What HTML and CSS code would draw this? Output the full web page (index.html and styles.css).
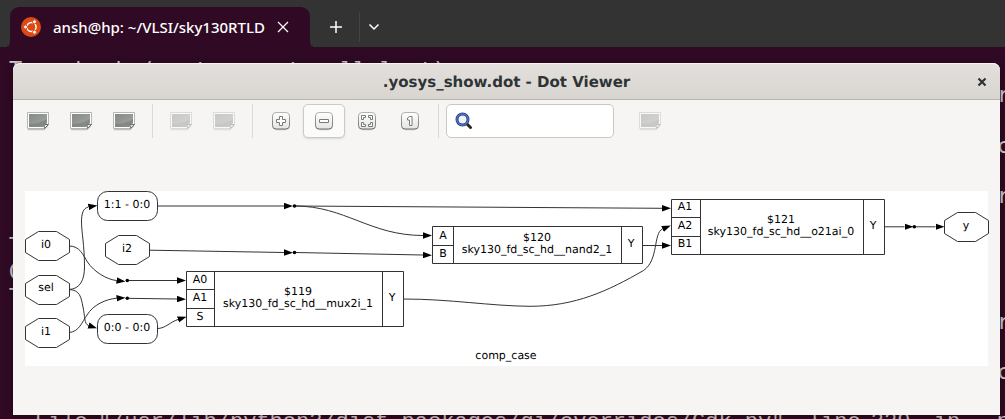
FILE: index.html
```html
<!DOCTYPE html>
<html lang="en">
<head>
<meta charset="utf-8">
<title>.yosys_show.dot - Dot Viewer</title>
<link rel="stylesheet" href="styles.css">
</head>
<body>
<svg class="defs" aria-hidden="true">
  <defs>
    <linearGradient id="photo" x1="0" y1="0" x2="1" y2="1"><stop offset="0" stop-color="#858a85"/><stop offset="1" stop-color="#a5a8a4"/></linearGradient>
    <linearGradient id="key" x1="0" y1="0" x2="0" y2="1"><stop offset="0" stop-color="#ffffff"/><stop offset="1" stop-color="#e4e4e2"/></linearGradient>
    <linearGradient id="keyline" x1="0" y1="0" x2="0" y2="1"><stop offset="0" stop-color="#b4b4b2"/><stop offset="1" stop-color="#6c6e6b"/></linearGradient>
    <symbol id="image" viewBox="0 0 24 20">
      <path d="M2 18.500h16l4-4" fill="none" stroke="#000" stroke-opacity=".22" stroke-width="1.500"/>
      <path d="M1.500 1.500h21v12l-4 4h-17z" fill="#fff" stroke="#b5b7b4"/>
      <path d="M3 3h18v9l-4 4h-14z" fill="url(#photo)"/>
      <path d="M3 13c7 0 13-2 18-5v4l-4 4h-14z" fill="#777c77" opacity=".6"/>
      <path d="M18.500 17.500l-.5-4h4.500z" fill="#e8e8e6" stroke="#6f726f"/>
    </symbol>
    <symbol id="keycap" viewBox="0 0 20 20">
      <rect x="2" y="3" width="16" height="16" rx="4" fill="#000" opacity=".22"/>
      <rect x="1.500" y="1.500" width="17" height="16.500" rx="3.500" fill="url(#key)" stroke="url(#keyline)"/>
    </symbol>
    <symbol id="oct" viewBox="0 0 46 31" overflow="visible">
      <path d="M1 9l13-8h18l13 8v13l-13 8h-18l-13-8z"/>
    </symbol>
    <marker id="arrow" viewBox="0 0 9 7" refX="0" refY="3.500" markerWidth="9" markerHeight="7" markerUnits="userSpaceOnUse" orient="auto">
      <path d="M0 0.300L9 3.500L0 6.700z"/>
    </marker>
  </defs>
</svg>

<header class="tabbar">
  <div class="tab">
    <svg class="ubuntu" viewBox="0 0 20 20" aria-hidden="true">
      <circle cx="10" cy="10" r="10" fill="#dd4814"/>
      <circle cx="10.500" cy="10" r="4.600" fill="none" stroke="#fff" stroke-width="1.500"/>
      <g stroke="#dd4814" stroke-width="1"><circle cx="4.500" cy="10" r="2" fill="#fff"/><circle cx="13.500" cy="4.800" r="2" fill="#fff"/><circle cx="13.500" cy="15.200" r="2" fill="#fff"/></g>
    </svg>
    <span class="tab-title">ansh@hp: ~/VLSI/sky130RTLD</span>
    <button class="flat" aria-label="Close tab"><svg width="12" height="12" viewBox="0 0 12 12"><path d="M1 1l10 10M11 1L1 11"/></svg></button>
  </div>
  <button class="flat newtab" aria-label="New tab"><svg width="14" height="14" viewBox="0 0 14 14"><path d="M7 1v12M1 7h12" stroke-width="1.500"/></svg></button>
  <button class="flat menu" aria-label="Tab menu"><svg width="12" height="8" viewBox="0 0 12 8"><path d="M1.500 1.500l4.500 4.500l4.500-4.500" stroke-width="1.500"/></svg></button>
</header>

<main class="terminal">
  <div class="lines">
    <div class="line"><span>Traceback (most recent call last):</span></div>
    <div class="line"><span></span><span class="edge">r</span></div>
    <div class="line"></div>
    <div class="line"><span></span><span class="edge">c</span></div>
    <div class="line"></div>
    <div class="line"><span></span><span class="edge">r</span></div>
    <div class="line"></div>
    <div class="line"><span>T</span></div>
    <div class="line"><span>G</span></div>
    <div class="line"><span>T</span></div>
    <div class="line"><span></span><span class="edge">r</span></div>
    <div class="line"></div>
    <div class="line"><span></span><span class="edge">c</span></div>
    <div class="line"></div>
    <div class="line trace"><span>File</span><span>"/usr/lib/python3/dist-packages/gi/overrides/Gdk.py",</span><span>line</span><span>329,</span><span>in</span><span class="edge">__n</span></div>
  </div>
</main>

<section class="window" aria-label="Dot Viewer">
  <div class="titlebar">
    <h1 class="title">.yosys_show.dot - Dot Viewer</h1>
    <button class="close" aria-label="Close"><svg width="10" height="10" viewBox="0 0 10 10"><path d="M1.500 1.500l7 7M8.500 1.500l-7 7"/></svg></button>
  </div>
  <div class="toolbar">
    <button class="tool" aria-label="Open"><svg class="pic"><use href="#image"/></svg></button>
    <button class="tool" aria-label="Reload"><svg class="pic"><use href="#image"/></svg></button>
    <button class="tool" aria-label="Print"><svg class="pic"><use href="#image"/></svg></button>
    <span class="sep"></span>
    <button class="tool" aria-label="Back" disabled><svg class="pic"><use href="#image"/></svg></button>
    <button class="tool" aria-label="Forward" disabled><svg class="pic"><use href="#image"/></svg></button>
    <span class="sep"></span>
    <button class="tool" aria-label="Zoom in"><svg class="key" viewBox="0 0 20 20"><use href="#keycap"/><path d="M8.500 5.500h3v3h3v3h-3v3h-3v-3h-3v-3h3z"/></svg></button>
    <button class="tool active" aria-label="Zoom out"><svg class="key" viewBox="0 0 20 20"><use href="#keycap"/><path d="M5.500 8.500h9v3h-9z"/></svg></button>
    <button class="tool" aria-label="Zoom to fit"><svg class="key" viewBox="0 0 20 20"><use href="#keycap"/><path d="M4.500 4.500h4v2h-2v2h-2zM15.500 4.500h-4v2h2v2h2zM4.500 15.500h4v-2h-2v-2h-2zM15.500 15.500h-4v-2h2v-2h2z"/></svg></button>
    <button class="tool" aria-label="Zoom to 100%"><svg class="key" viewBox="0 0 20 20"><use href="#keycap"/><path d="M9.500 5.500h2.500v9h-2.500v-5.500h-2v-2z"/></svg></button>
    <span class="sep"></span>
    <label class="search">
      <svg width="18" height="18" viewBox="0 0 18 18" aria-hidden="true">
        <path d="M11.500 11.500l4 4" stroke="#2c2424" stroke-width="3" stroke-linecap="round"/>
        <circle cx="7.500" cy="7.500" r="5.500" fill="#eef3fa" stroke="#27408f" stroke-width="3"/>
        <circle cx="7.500" cy="7.500" r="5.600" fill="none" stroke="#7089cc" stroke-width="1"/>
      </svg>
      <input type="text" aria-label="Find">
    </label>
    <button class="tool find" aria-label="Find next" disabled><svg class="pic"><use href="#image"/></svg></button>
  </div>
  <div class="canvas">
    <svg class="graph" viewBox="25 191 963 175" role="img" aria-label="comp_case">
      <g class="shape">
        <use href="#oct" x="24.500" y="230.500" width="46" height="31"/>
        <use href="#oct" x="24.500" y="274.500" width="46" height="31"/>
        <use href="#oct" x="24.500" y="317.500" width="46" height="31"/>
        <use href="#oct" x="104.500" y="234.500" width="46" height="31"/>
        <use href="#oct" x="943.500" y="211.500" width="46" height="31"/>
        <rect x="97.500" y="191.500" width="60" height="29" rx="10"/>
        <rect x="97.500" y="314.500" width="60" height="29" rx="10"/>
        <path d="M186.500 271.500h217v55h-217zM214.500 271.500v55M382.500 271.500v55M186.500 289.500h28M186.500 308.500h28"/>
        <path d="M432.500 226.500h210v37h-210zM453.500 226.500v37M621.500 226.500v37M432.500 245.500h21"/>
        <path d="M671.500 199.500h213v55h-213zM700.500 199.500v55M863.500 199.500v55M671.500 217.500h29M671.500 236.500h29"/>
      </g>
      <g class="edges">
        <path d="M158 206H284"/>
        <path d="M295 206L662 208.300"/>
        <path d="M295 206C345 206 370 235.500 423 235.500"/>
        <path d="M150 250.200L284 252.500"/>
        <path d="M295 252.500L423 255"/>
        <path d="M69 246C80 246 83 255 87.500 262C94 272 107 279.500 116.500 280.500"/>
        <path d="M127 280.500H177"/>
        <path d="M69 289.500C80 289 84.500 280 84.500 267C84.500 245 81.500 232 81.500 222C81.500 214 83 208 88.500 207"/>
        <path d="M69 289.500C80 290 81 297 83 307C85 316 84 324 88.500 325.500"/>
        <path d="M69 332.500C79 332 82 322 87 315C93 305 106 299 116.500 298.300"/>
        <path d="M127 298.300L177 299"/>
        <path d="M158 328.500C166 328 170 322 178 319.500"/>
        <path d="M403.500 299C450 299 490 306 530 306.300C575 306.300 608 291 643.500 270.500C659 260 653 233 662.500 229"/>
        <path d="M642.500 245.500H662"/>
        <path d="M884.500 226.800H904.500"/>
        <path d="M914 226.800H935.500"/>
      </g>
      <g class="dots">
        <circle cx="294.500" cy="206" r="1.800"/><circle cx="294.500" cy="252.500" r="1.800"/><circle cx="127.300" cy="280.500" r="1.800"/><circle cx="127.300" cy="298.300" r="1.800"/><circle cx="914.300" cy="226.800" r="1.800"/>
      </g>
      <g class="labels">
        <text x="46" y="248">i0</text><text x="46" y="291">sel</text><text x="46" y="335">i1</text>
        <text x="127" y="252">i2</text><text x="127" y="208">1:1 - 0:0</text><text x="127" y="331">0:0 - 0:0</text>
        <text x="200" y="283">A0</text><text x="200" y="301">A1</text><text x="200" y="320">S</text>
        <text x="298" y="295">$119</text><text x="298" y="307">sky130_fd_sc_hd__mux2i_1</text><text x="392" y="301">Y</text>
        <text x="443" y="239">A</text><text x="443" y="257">B</text>
        <text x="537" y="241">$120</text><text x="537" y="253">sky130_fd_sc_hd__nand2_1</text><text x="631" y="247">Y</text>
        <text x="685" y="210">A1</text><text x="685" y="229">A2</text><text x="685" y="247">B1</text>
        <text x="781" y="223">$121</text><text x="781" y="235">sky130_fd_sc_hd__o21ai_0</text><text x="873" y="229">Y</text>
        <text x="966" y="229">y</text><text x="506" y="359">comp_case</text>
      </g>
    </svg>
  </div>
</section>
</body>
</html>
```

FILE: styles.css
```css
* { box-sizing: border-box; }

body {
  margin: 0;
  height: 100vh;
  overflow: hidden;
  position: relative;
  display: flex;
  flex-direction: column;
  background: #300a24;
  font-family: "DejaVu Sans", sans-serif;
}

button {
  margin: 0;
  padding: 0;
  border: 0;
  background: none;
  display: flex;
  align-items: center;
  justify-content: center;
}

.defs { position: absolute; width: 0; height: 0; }

/* Terminal tab strip */
.tabbar {
  flex: none;
  height: 47px;
  padding: 7px 10px 0;
  display: flex;
  background: #333333;
}

.tab {
  position: relative;
  width: 300px;
  padding: 0 21px 0 11px;
  display: flex;
  align-items: center;
  background: #300a24;
  border-radius: 9px 9px 0 0;
}

.tab::before,
.tab::after {
  content: "";
  position: absolute;
  bottom: 0;
  width: 5px;
  height: 5px;
}

.tab::before { right: 100%; background: radial-gradient(circle at 0 0, #333333 5px, #300a24 5px); }
.tab::after { left: 100%; background: radial-gradient(circle at 100% 0, #333333 5px, #300a24 5px); }

.ubuntu { flex: none; width: 20px; height: 20px; }

.tab-title {
  flex: 1;
  margin: 0 12px;
  white-space: nowrap;
  color: #ffffff;
  font: 500 15px/20px "Noto Sans", sans-serif;
}

.flat svg { fill: none; stroke: #ffffff; stroke-width: 1.2; }
.newtab { width: 46px; margin-left: 3px; }
.menu { width: 28px; height: 30px; margin-top: 5px; border-left: 1px solid #444444; }

/* Terminal output */
.terminal {
  flex: 1;
  min-height: 0;
  padding: 10px 0 0 9px;
}

.lines {
  height: calc(100% + 16px);
  display: flex;
  flex-direction: column;
  justify-content: space-between;
  color: #d8cfd5;
  font: 22px/25px "DejaVu Sans Mono", monospace;
}

.line {
  flex: none;
  height: 25px;
  display: flex;
  justify-content: space-between;
  white-space: pre;
}

.edge { margin-right: -5px; }
.trace { padding-left: 26px; font-family: "Liberation Mono", monospace; }

/* Viewer window, floating over the terminal */
.window {
  position: absolute;
  top: 63px;
  right: 5px;
  bottom: 4px;
  left: 13px;
  display: flex;
  flex-direction: column;
  background: #f6f5f3;
  border-radius: 7px 7px 0 0;
  box-shadow: 0 1px 6px 1px rgba(0, 0, 0, 0.35);
}

.titlebar {
  flex: none;
  height: 37px;
  padding: 0 10px;
  display: grid;
  grid-template-columns: 16px 1fr 16px;
  align-items: center;
  background: linear-gradient(#e2dfdc, #d9d6d1);
  border-top: 1px solid #f6f5f4;
  border-bottom: 1px solid #b9b5ad;
  border-radius: 7px 7px 0 0;
}

.title {
  grid-column: 2;
  margin: 0;
  color: #2e3436;
  font-size: 15px;
  font-weight: 700;
  line-height: 20px;
  text-align: center;
  text-rendering: geometricPrecision;
}

.close svg { fill: none; stroke: #2e3436; stroke-width: 2.2; }

.toolbar {
  flex: none;
  height: 42px;
  padding: 4px;
  display: flex;
  gap: 1px;
}

.tool {
  width: 42px;
  height: 34px;
  border: 1px solid transparent;
  border-radius: 5px;
}

.tool.active {
  background: #fbfbfa;
  border-color: #cdc9c5;
  box-shadow: 0 1px 2px rgba(0, 0, 0, 0.12);
}

.tool:disabled { opacity: 0.4; }
.pic { width: 24px; height: 20px; }
.key { width: 20px; height: 20px; fill: #ffffff; stroke: #777a76; }
.sep { width: 1px; margin: 0 6px; background: #dbd8d5; }
.find { margin-left: 14px; }

.search {
  width: 168px;
  padding: 0 8px;
  display: flex;
  align-items: center;
  gap: 6px;
  background: #ffffff;
  border: 1px solid #cdc7c2;
  border-radius: 5px;
}

.search svg { flex: none; fill: none; }

.search input {
  flex: 1;
  min-width: 0;
  border: 0;
  outline: 0;
  background: none;
  font: 13px "DejaVu Sans", sans-serif;
}

.canvas {
  flex: 1;
  min-height: 0;
  padding: 0 12px;
  display: flex;
  align-items: center;
}

.graph { display: block; width: 100%; height: auto; overflow: visible; background: #ffffff; }
.shape { fill: none; stroke: #333333; stroke-width: 1; }
.edges path { fill: none; stroke: #333333; stroke-width: 1; marker-end: url(#arrow); }
.labels text { font-size: 11px; text-anchor: middle; fill: #000000; text-rendering: geometricPrecision; }
```
